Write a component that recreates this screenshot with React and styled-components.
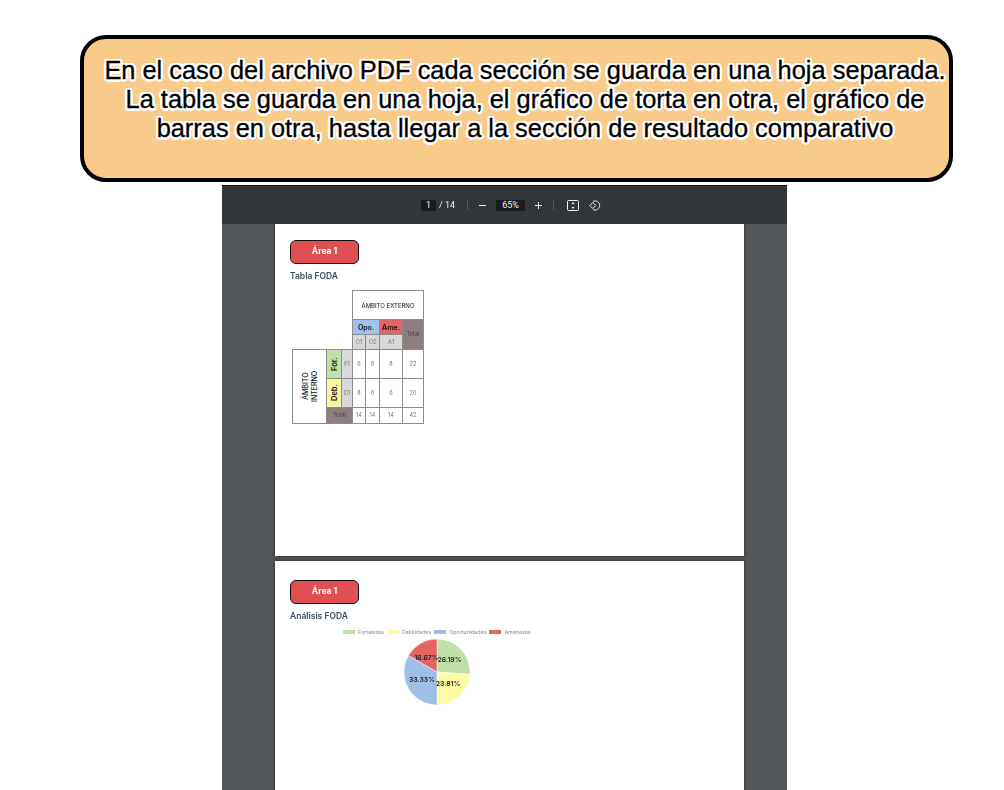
import React from 'react';
import styled, { createGlobalStyle } from 'styled-components';

const GlobalStyle = createGlobalStyle`
    html, body { margin: 0; padding: 0; background: #fff; }
    #root { width: 1004px; height: 790px; overflow: hidden; }
`;
const Screen = styled.div`
    height: 790px;
    display: flex;
    flex-direction: column;
    align-items: flex-start;
    background: #fff;
    font-family: "Liberation Sans", Arial, sans-serif;
`;
const Callout = styled.div`
    box-sizing: border-box;
    width: 873px;
    height: 147px;
    margin: 35px 0 3px 80px;
    padding: 17px 0 0 17px;
    background: #f9cb8b;
    border: 4px solid #000;
    border-radius: 26px;
    text-align: center;
    font-size: 25.4px;
    line-height: 29px;
    color: #000;
    white-space: nowrap;
    -webkit-text-stroke: 0.3px #000;
    text-shadow: 2.5px 0 0 #fff, -2.5px 0 0 #fff, 0 2.5px 0 #fff, 0 -2.5px 0 #fff,
        2px 2px 0 #fff, -2px 2px 0 #fff, 2px -2px 0 #fff, -2px -2px 0 #fff,
        1px 2.3px 0 #fff, -1px 2.3px 0 #fff, 1px -2.3px 0 #fff, -1px -2.3px 0 #fff;
`;
const Viewer = styled.div`
    width: 565px;
    flex: 1;
    min-height: 0;
    margin-left: 222px;
    display: flex;
    flex-direction: column;
    background: #53575a;
    overflow: hidden;
`;
const Toolbar = styled.div`
    height: 39px;
    flex: none;
    position: relative;
    z-index: 1;
    display: flex;
    align-items: center;
    padding-left: 199px;
    background: #323639;
    border-top: 1px solid #14141c;
    box-sizing: border-box;
    color: #f1f1f1;
    font-size: 9px;
    font-family: "Roboto", sans-serif;
`;
const Controls = styled.div`
    display: flex;
    align-items: center;
    filter: blur(0.3px);
`;
const PageBox = styled.span`
    width: 15px;
    height: 11px;
    margin-right: 3px;
    background: #191b1c;
    text-align: center;
    line-height: 11px;
`;
const Count = styled.span`
    width: 22px;
    white-space: nowrap;
`;
const Divider = styled.span`
    width: 1px;
    height: 10px;
    background: #55595c;
    margin: ${(p) => p.$margin};
`;
const ZoomBox = styled.span`
    width: 29px;
    height: 11px;
    margin: 0 9px 0 9px;
    background: #191b1c;
    text-align: center;
    line-height: 11px;
`;
const Glyph = styled.svg`
    flex: none;
    display: block;
    margin: ${(p) => p.$margin || 0};
`;
const Pages = styled.div`
    flex: 1;
    min-height: 0;
    display: flex;
    flex-direction: column;
    align-items: center;
    gap: 5px;
    padding-left: 10px;
`;
const Page = styled.div`
    box-sizing: border-box;
    width: 469px;
    flex: none;
    height: ${(p) => p.$height}px;
    padding: ${(p) => p.$top}px 0 0 15px;
    background: #fff;
    box-shadow: 0 0 3px rgba(0, 0, 0, 0.55);
    font-family: "Inter", "Open Sans", sans-serif;
`;
const Soft = styled.div`
    filter: blur(0.5px);
`;
const AreaBadge = styled.div`
    box-sizing: border-box;
    width: 69px;
    height: 24px;
    background: #e05052;
    border: 1.5px solid #111;
    border-radius: 6px;
    color: #fff;
    font-size: 8.5px;
    font-weight: 700;
    line-height: 21px;
    text-align: center;
`;
const SectionTitle = styled.div`
    margin-top: 6px;
    height: 12px;
    font-size: 8.5px;
    line-height: 12px;
    font-weight: 600;
    color: #3d4c5c;
`;
const FodaGrid = styled.div`
    display: grid;
    grid-template-columns: 34px 15px 11px 13px 14px 23px 21px;
    grid-template-rows: 29px 15px 15px 29px 29px 16px;
    width: 131px;
    margin: 8px 0 0 2px;
`;
const Cell = styled.div`
    box-sizing: border-box;
    grid-column: ${(p) => p.$col};
    grid-row: ${(p) => p.$row};
    margin: 0 -1px -1px 0;
    display: flex;
    align-items: center;
    justify-content: center;
    background: ${(p) => p.$bg || '#fff'};
    border: 1px solid #8c8c8c;
    color: ${(p) => p.$color || '#777'};
    font-size: ${(p) => p.$size || 5.5}px;
    font-weight: ${(p) => p.$weight || 400};
    line-height: ${(p) => (p.$size > 6.5 ? 9 : 7)}px;
    text-align: center;
    ${(p) => p.$vertical && 'writing-mode: vertical-rl; transform: rotate(180deg);'}
`;
const Legend = styled.div`
    display: flex;
    align-items: center;
    gap: 3px;
    height: 6px;
    margin: 7px 0 0 53px;
    color: #8a8a8a;
    font-size: 5.3px;
    white-space: nowrap;
`;
const Swatch = styled.span`
    width: 12px;
    height: 4px;
    background: ${(p) => p.$color};
`;
const PieWrap = styled.div`
    width: 70px;
    margin: 2px 0 0 112px;
`;

const legend = [
    ['Fortalezas', '#bfe0a8'],
    ['Debilidades', '#fbfba6'],
    ['Oportunidades', '#9fbfe6'],
    ['Amenazas', '#e46464'],
];

const slices = [
    [26.19, '#bfe0a8'],
    [23.81, '#fbfba6'],
    [33.33, '#9fbfe6'],
    [16.67, '#e46464'],
];

// pie wedges run clockwise from 12 o'clock
const wedges = slices.reduce((acc, [pct, color]) => {
    const start = acc.length ? acc[acc.length - 1].end : 0;
    const end = start + pct;
    const at = (v) => {
        const a = (v / 100) * Math.PI * 2;
        return `${(35 + 33 * Math.sin(a)).toFixed(2)} ${(35 - 33 * Math.cos(a)).toFixed(2)}`;
    };
    acc.push({ color, end, d: `M35 35 L${at(start)} A33 33 0 ${pct > 50 ? 1 : 0} 1 ${at(end)} Z` });
    return acc;
}, []);

const Pie = () => (
    <svg width="70" height="70" viewBox="0 0 70 70">
        {wedges.map((w) => (
            <path key={w.color} d={w.d} fill={w.color} stroke="#fff" strokeWidth="0.5" />
        ))}
        <g fontSize="6.8" fontWeight="600" fill="#222" textAnchor="middle" fontFamily="Inter, sans-serif">
            <text x="47.5" y="24.5">26.19%</text>
            <text x="46" y="48.5">23.81%</text>
            <text x="20" y="44.5">33.33%</text>
            <text x="24.5" y="22.5">16.67%</text>
        </g>
    </svg>
);

const FodaTable = () => (
    <FodaGrid>
        <Cell $col="4 / 8" $row="1" $color="#111" $size={6}>ÁMBITO EXTERNO</Cell>
        <Cell $col="4 / 6" $row="2" $bg="#9fc3ea" $color="#111" $size={7} $weight={600}>Opo.</Cell>
        <Cell $col="6" $row="2" $bg="#e46464" $color="#111" $size={7} $weight={600}>Ame.</Cell>
        <Cell $col="7" $row="2 / 4" $bg="#8d7f7f" $color="#444">Total</Cell>
        <Cell $col="4" $row="3" $bg="#d9d9d9">O1</Cell>
        <Cell $col="5" $row="3" $bg="#d9d9d9">O2</Cell>
        <Cell $col="6" $row="3" $bg="#d9d9d9">A1</Cell>

        <Cell $col="1" $row="4 / 7" $color="#111" $size={7} $weight={500} $vertical>ÁMBITO<br />INTERNO</Cell>
        <Cell $col="2" $row="4" $bg="#bfe0a8" $color="#111" $size={7.5} $weight={600} $vertical>For.</Cell>
        <Cell $col="3" $row="4" $bg="#d9d9d9">F1</Cell>
        <Cell $col="4" $row="4">6</Cell>
        <Cell $col="5" $row="4">8</Cell>
        <Cell $col="6" $row="4">8</Cell>
        <Cell $col="7" $row="4">22</Cell>

        <Cell $col="2" $row="5" $bg="#fbf7a0" $color="#111" $size={7.5} $weight={600} $vertical>Deb.</Cell>
        <Cell $col="3" $row="5" $bg="#d9d9d9">D1</Cell>
        <Cell $col="4" $row="5">8</Cell>
        <Cell $col="5" $row="5">6</Cell>
        <Cell $col="6" $row="5">6</Cell>
        <Cell $col="7" $row="5">20</Cell>

        <Cell $col="2 / 4" $row="6" $bg="#8d7f7f" $color="#444">Total</Cell>
        <Cell $col="4" $row="6">14</Cell>
        <Cell $col="5" $row="6">14</Cell>
        <Cell $col="6" $row="6">14</Cell>
        <Cell $col="7" $row="6">42</Cell>
    </FodaGrid>
);

const App = () => (
    <Screen>
        <GlobalStyle />
        <Callout>
            En el caso del archivo PDF cada sección se guarda en una hoja separada.<br />
            La tabla se guarda en una hoja, el gráfico de torta en otra, el gráfico de<br />
            barras en otra, hasta llegar a la sección de resultado comparativo
        </Callout>
        <Viewer>
            <Toolbar>
                <Controls>
                    <PageBox>1</PageBox>
                    <Count>/ 14</Count>
                    <Divider $margin="0 10px 0 6px" />
                    <Glyph width="9" height="9" viewBox="0 0 9 9">
                        <path d="M1 4.5h7" stroke="#f1f1f1" strokeWidth="1" />
                    </Glyph>
                    <ZoomBox>65%</ZoomBox>
                    <Glyph width="9" height="9" viewBox="0 0 9 9">
                        <path d="M1 4.5h7M4.5 1v7" stroke="#f1f1f1" strokeWidth="1" />
                    </Glyph>
                    <Divider $margin="0 13px 0 10px" />
                    <Glyph width="12" height="11" viewBox="0 0 12 11" $margin="0 10px 0 0">
                        <rect x="0.5" y="0.5" width="11" height="10" rx="1" fill="none" stroke="#f1f1f1" />
                        <path d="M6 2l1.6 2H4.4zM6 9L4.4 7h3.2z" fill="#f1f1f1" />
                    </Glyph>
                    <Glyph width="13" height="13" viewBox="0 0 13 13">
                        <path d="M4 2.4A4.6 4.6 0 1 1 4 10.6" fill="none" stroke="#f1f1f1" strokeWidth="1" />
                        <path d="M0.8 6.5L3.8 3.5L6.8 6.5L3.8 9.5Z" fill="none" stroke="#f1f1f1" strokeWidth="1" />
                    </Glyph>
                </Controls>
            </Toolbar>
            <Pages>
                <Page $height={332} $top={16}>
                    <Soft>
                        <AreaBadge>Área 1</AreaBadge>
                        <SectionTitle>Tabla FODA</SectionTitle>
                        <FodaTable />
                    </Soft>
                </Page>
                <Page $height={300} $top={19}>
                    <Soft>
                        <AreaBadge>Área 1</AreaBadge>
                        <SectionTitle>Análisis FODA</SectionTitle>
                        <Legend>
                            {legend.map(([label, color]) => (
                                <React.Fragment key={label}>
                                    <Swatch $color={color} />
                                    <span>{label}</span>
                                </React.Fragment>
                            ))}
                        </Legend>
                        <PieWrap>
                            <Pie />
                        </PieWrap>
                    </Soft>
                </Page>
            </Pages>
        </Viewer>
    </Screen>
);

export default App;
